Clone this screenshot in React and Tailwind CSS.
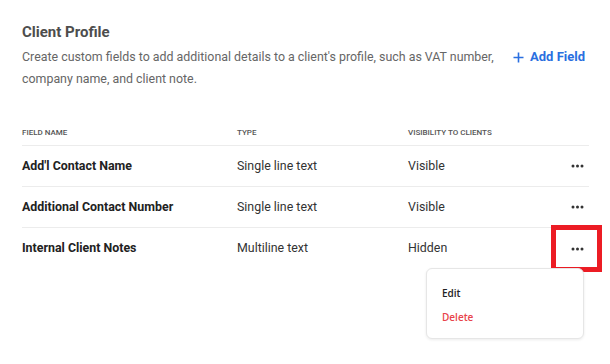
import React from "react";

function Dots() {
  return (
    <svg width="13" height="4" viewBox="0 0 13 4" className="text-[#333]">
      <circle cx="2" cy="2" r="1.5" fill="currentColor" />
      <circle cx="6.5" cy="2" r="1.5" fill="currentColor" />
      <circle cx="11" cy="2" r="1.5" fill="currentColor" />
    </svg>
  );
}

export default function App() {
  const rows = [
    { name: "Add'l Contact Name", type: "Single line text", vis: "Visible" },
    { name: "Additional Contact Number", type: "Single line text", vis: "Visible" },
    { name: "Internal Client Notes", type: "Multiline text", vis: "Hidden", active: true },
  ];

  return (
    <div
      className="w-[610px] h-[364px] bg-white relative overflow-hidden"
      style={{ fontFamily: "Roboto, 'Liberation Sans', sans-serif" }}
    >
      <div className="pl-[22px] pr-[21px] pt-[22px]">
        {/* Header */}
        <h1 className="text-[15px] leading-[20px] font-bold text-[#4d4d4d]">Client Profile</h1>
        <div className="flex items-start justify-between mt-[4px]">
          <p className="text-[12.4px] leading-[22px] text-[#666] w-[485px]">
            Create custom fields to add additional details to a client's profile, such as VAT number,
            company name, and client note.
          </p>
          <button className="flex items-center gap-[6px] text-[13px] leading-[22px] font-bold text-[#2a6fe0] mr-[4px]">
            <svg width="11" height="11" viewBox="0 0 11 11">
              <path d="M5.5 0.5v10M0.5 5.5h10" stroke="currentColor" strokeWidth="1.6" />
            </svg>
            Add Field
          </button>
        </div>

        {/* Table */}
        <div className="mt-[30px]">
          <div className="flex items-center h-[26px] text-[8px] font-medium uppercase text-[#555] border-b border-[#ececec]">
            <div className="w-[215px]">Field Name</div>
            <div className="w-[171px]">Type</div>
            <div>Visibility to clients</div>
          </div>
          {rows.map((r, i) => (
            <div
              key={r.name}
              className={
                "flex items-center h-[41px] " + (i < rows.length - 1 ? "border-b border-[#ececec]" : "")
              }
            >
              <div className="w-[215px] text-[12.4px] font-bold text-[#222]">{r.name}</div>
              <div className="w-[171px] text-[12.4px] text-[#333]">{r.type}</div>
              <div className="flex-1 text-[12.4px] text-[#333]">{r.vis}</div>
              <div className="w-[18px] flex items-center">
                <Dots />
              </div>
            </div>
          ))}
        </div>
      </div>

      {/* Highlight box */}
      <div className="absolute left-[551px] top-[225px] w-[51px] h-[47px] border-[5px] border-[#ec1c24]" />

      {/* Dropdown menu */}
      <div
        className="absolute left-[426px] top-[268px] w-[158px] h-[71px] bg-white rounded-[6px] border border-[#e6e6e6] shadow-[0_1px_3px_rgba(0,0,0,0.08)] pl-[15px] pt-[17px]"
        style={{ fontFamily: "'Open Sans', 'Noto Sans', sans-serif" }}
      >
        <div className="text-[10px] leading-[14px] font-semibold text-[#222]">Edit</div>
        <div className="text-[10px] leading-[14px] font-semibold text-[#e8434a] mt-[10px]">Delete</div>
      </div>
    </div>
  );
}
